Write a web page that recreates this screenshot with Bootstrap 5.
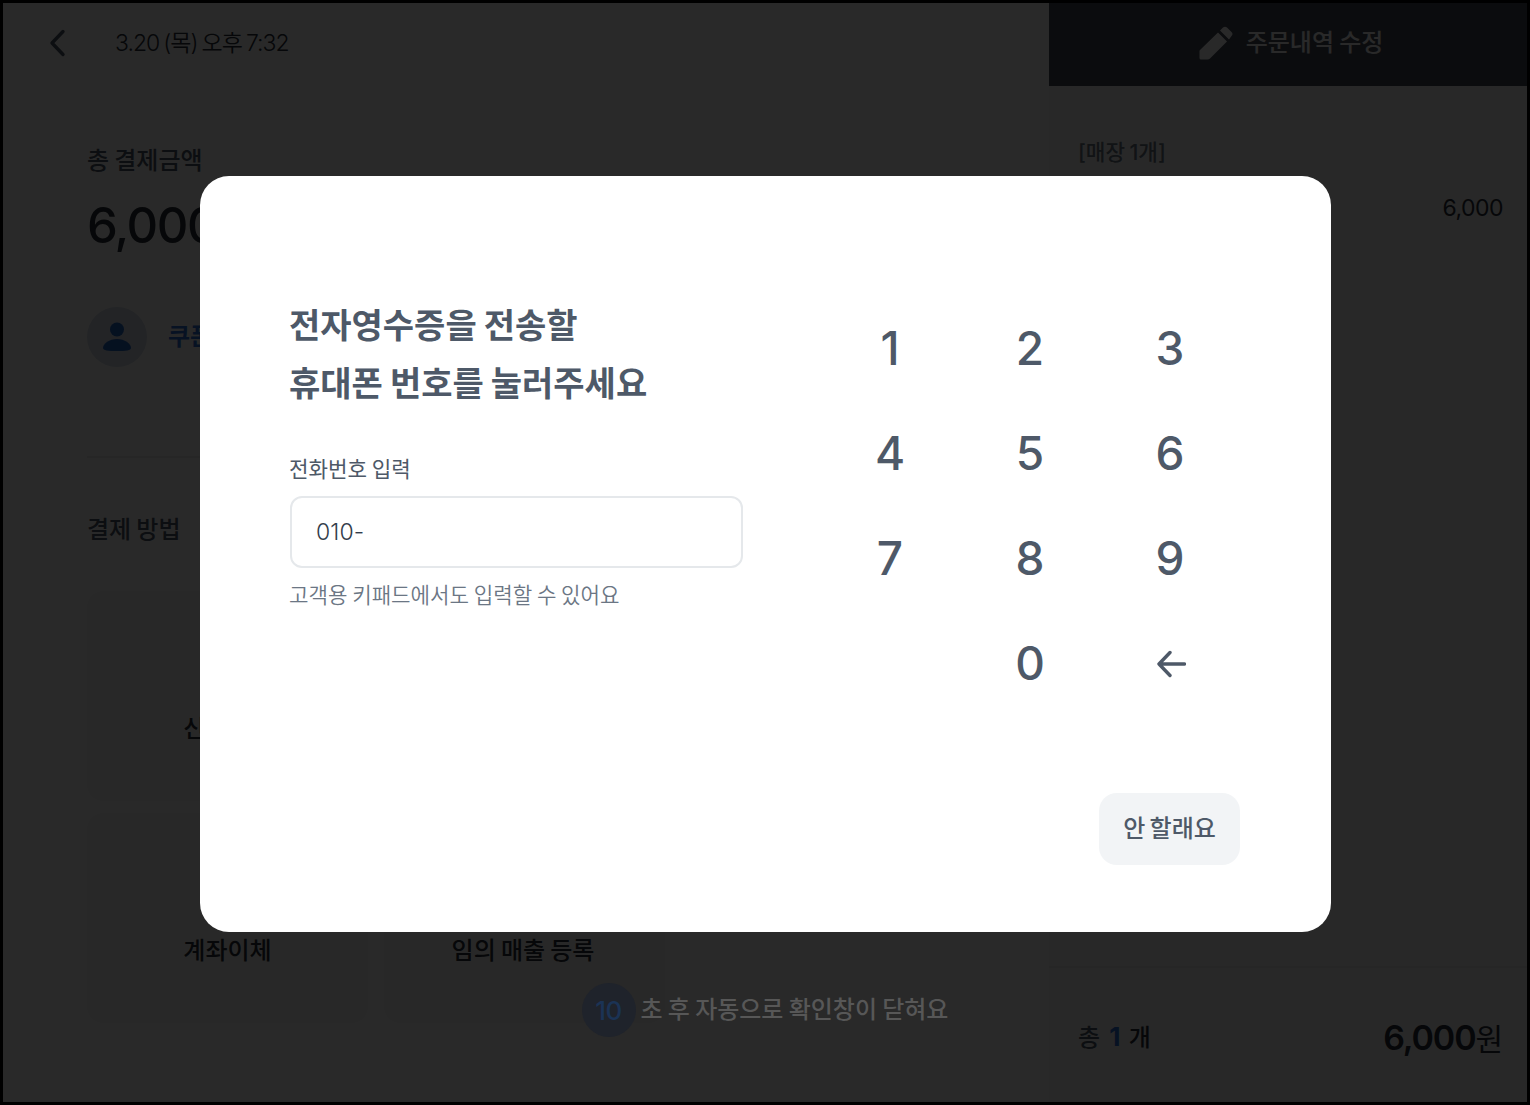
<!DOCTYPE html>
<html lang="ko">
<head>
  <meta charset="UTF-8" />
  <title>전자영수증</title>
  <meta name="viewport" content="width=device-width, initial-scale=1.0" />
  <link href="https://cdn.jsdelivr.net/npm/bootstrap@5.3.3/dist/css/bootstrap.min.css" rel="stylesheet" />
  <style>
    body {
      font-family: Inter, 'Noto Sans CJK KR', sans-serif;
      font-size: 24px;
      line-height: 1.5;
      word-spacing: -1.2px;
      color: #2a3038;
      background: #000;
    }
    .pos-screen {
      width: 1530px;
      height: 1105px;
      border: 3px solid #000;
      background: #fff;
      overflow: hidden;
    }
    .pay-side { width: 1046px; padding: 0 84px; }
    .order-side { width: 478px; background: #f9f9f9; }
    .grey-700 { color: #4e5968; }
    .blue-500 { color: #2f6fd6; }

    /* payment side */
    .top-line { height: 80px; margin-left: -42px; }
    .top-date { margin-left: 48px; font-size: 23px; font-weight: 350; letter-spacing: -1px; word-spacing: -1.4px; }
    .sum-label { margin-top: 60px; }
    .sum-value { font-size: 49px; font-weight: 500; line-height: 60px; margin-top: 17px; letter-spacing: -1.4px; }
    .sum-value span { margin-left: -2px; }
    .coupon { height: 60px; margin-top: 51px; }
    .coupon-icon { width: 60px; height: 60px; background: #d6deea; }
    .coupon-name { margin-left: 21px; font-weight: 700; }
    .pay-line { height: 2px; margin-top: 89px; background: #e8e8e8; }
    .method-title { margin: 54px 0 43px; }
    .method-grid { gap: 12px 16px; }
    .method { width: 281px; height: 210px; padding-bottom: 54px; border-radius: 16px; background: #f7f7f7; font-weight: 500; }
    .method-wide { padding-right: 3px; }

    /* order side */
    .order-head { height: 83px; padding: 0 0 4px 6px; background: #454b57; color: #fff; font-weight: 500; }
    .order-head svg { margin-right: 13px; }
    .order-count { margin: 49px 29px 0; font-size: 21.3px; line-height: 34px; color: #6b7684; font-weight: 500; }
    .order-price { margin: 23px 24px 0; font-size: 23px; line-height: 32px; letter-spacing: -0.5px; }
    .order-foot { height: 136px; padding: 4px 25px 0 29px; border-top: 2px solid #ececec; }
    .order-num { margin: 0 3px 0 4px; font-size: 26px; line-height: 36px; }
    .order-sum { font-size: 34px; font-weight: 600; letter-spacing: -1.1px; }
    .order-sum span { font-size: 30px; font-weight: 400; }

    /* receipt dialog over the dimmed screen */
    .dim { top: 0; left: 0; width: 1530px; height: 1105px; padding-top: 176px; background: rgba(0, 0, 0, .84); }
    .receipt {
      width: 1131px;
      height: 756px;
      margin-left: 200px;
      padding: 120px 91px 67px 90px;
      border-radius: 29px;
      background: #fff;
      color: #4e5968;
    }
    .phone-side { width: 453px; }
    .receipt-title { font-size: 34px; line-height: 58px; font-weight: 700; margin: 1px 0 40px -1px; word-spacing: -1px; }
    .phone-label { font-size: 21.2px; line-height: 32px; margin: 0 0 11px -1px; }
    .phone-input { height: 72px; padding: 0 24px; border: 2px solid #e5e8eb; border-radius: 12px; font-size: 23px; font-weight: 300; color: #333d4b; letter-spacing: 0.1px; }
    .phone-help { font-size: 21.2px; line-height: 32px; margin: 11px 0 0 -1px; color: #6b7684; font-weight: 350; word-spacing: -1.3px; }
    .keypad { width: 420px; }
    .key { height: 105px; font-size: 46px; font-weight: 500; color: #4e5968; }
    .btn-skip, .btn-skip:hover { width: 141px; height: 72px; margin-top: 77px; border-radius: 18px; background: #f2f4f6; color: #4e5968; font-size: 24px; font-weight: 500; word-spacing: -2px; }
    .auto-close { width: 1530px; margin-top: 51px; color: #575757; word-spacing: -1.2px; }
    .auto-sec { width: 54px; height: 54px; margin-right: 5px; background: #1f232b; color: #1b3355; font-size: 26px; font-weight: 500; letter-spacing: -0.5px; }
  </style>
</head>
<body>
  <div class="pos-screen d-flex">
    <main class="pay-side">
      <div class="top-line d-flex align-items-center">
        <svg width="22" height="28" viewBox="0 0 22 28" fill="none" stroke="#4e5968" stroke-width="3.4" stroke-linecap="round" stroke-linejoin="round"><path d="M18 2.500 7 14 18 25.500" /></svg>
        <span class="top-date">3.20 (목) 오후 7:32</span>
      </div>
      <div class="sum-label fw-medium grey-700">총 결제금액</div>
      <div class="sum-value">6<span>,000원</span></div>
      <div class="coupon d-flex align-items-center">
        <div class="coupon-icon rounded-circle d-flex align-items-center justify-content-center">
          <svg width="30" height="30" viewBox="0 0 30 30" fill="#2468c8"><circle cx="15" cy="7.5" r="7" /><path d="M15 17C7.500 17 1 21.500 1 26c0 2.500 5 3 14 3s14-.5 14-3c0-4.500-6.500-9-14-9z" /></svg>
        </div>
        <span class="coupon-name blue-500">쿠폰</span>
      </div>
      <div class="pay-line"></div>
      <div class="method-title fw-medium grey-700">결제 방법</div>
      <div class="method-grid d-flex flex-wrap">
        <div class="method d-flex align-items-end justify-content-center">신용카드</div>
        <div class="method"></div>
        <div class="method"></div>
        <div class="method d-flex align-items-end justify-content-center">계좌이체</div>
        <div class="method method-wide d-flex align-items-end justify-content-center">임의 매출 등록</div>
      </div>
    </main>

    <aside class="order-side d-flex flex-column">
      <div class="order-head d-flex align-items-center justify-content-center">
        <svg width="34" height="34" viewBox="0 0 34 34" fill="#fff"><path d="M19 6.500 28 15.500 11 32.500Q10 33.500 8.500 33.500H2Q.5 33.500.5 32V25Q.5 24 1.500 23.500zM21 4.500 24 1.500Q26 0 28 1.500L32.500 6Q34.500 8 32.500 10L30 13.500z" /></svg>
        <span>주문내역 수정</span>
      </div>
      <div class="order-count">[매장 1개]</div>
      <div class="order-price text-end">6,000</div>
      <div class="order-foot mt-auto d-flex align-items-center justify-content-between">
        <div class="fw-medium"><span class="grey-700">총</span> <b class="order-num blue-500">1</b> 개</div>
        <div class="order-sum">6,000<span>원</span></div>
      </div>
    </aside>
  </div>

  <div class="dim position-absolute">
    <div class="receipt" role="dialog">
      <div class="d-flex justify-content-between">
        <div class="phone-side">
          <h1 class="receipt-title text-nowrap">전자영수증을 전송할<br>휴대폰 번호를 눌러주세요</h1>
          <div class="phone-label">전화번호 입력</div>
          <div class="phone-input d-flex align-items-center">010-</div>
          <div class="phone-help">고객용 키패드에서도 입력할 수 있어요</div>
        </div>
        <div class="keypad row row-cols-3 g-0" id="keypad"></div>
      </div>
      <div class="d-flex justify-content-end">
        <button type="button" class="btn btn-skip border-0 p-0">안 할래요</button>
      </div>
    </div>
    <div class="auto-close d-flex align-items-center justify-content-center">
      <span class="auto-sec rounded-circle d-flex align-items-center justify-content-center">10</span>
      <span class="fw-medium">초 후 자동으로 확인창이 닫혀요</span>
    </div>
  </div>

  <script src="https://cdn.jsdelivr.net/npm/bootstrap@5.3.3/dist/js/bootstrap.bundle.min.js"></script>
  <script>
    const backIcon = `<svg width="32" height="30" viewBox="0 0 32 30" fill="none" stroke="#4e5968" stroke-width="3.4" stroke-linecap="round" stroke-linejoin="round"><path d="M16 3.500 5 15 16 26.500M5 15H30.500" /></svg>`;
    const keys = ["1", "2", "3", "4", "5", "6", "7", "8", "9", "", "0", backIcon];
    document.getElementById("keypad").innerHTML = keys.map(k =>
      `<div class="col key d-flex align-items-center justify-content-center">${k}</div>`
    ).join('');
  </script>
</body>
</html>
